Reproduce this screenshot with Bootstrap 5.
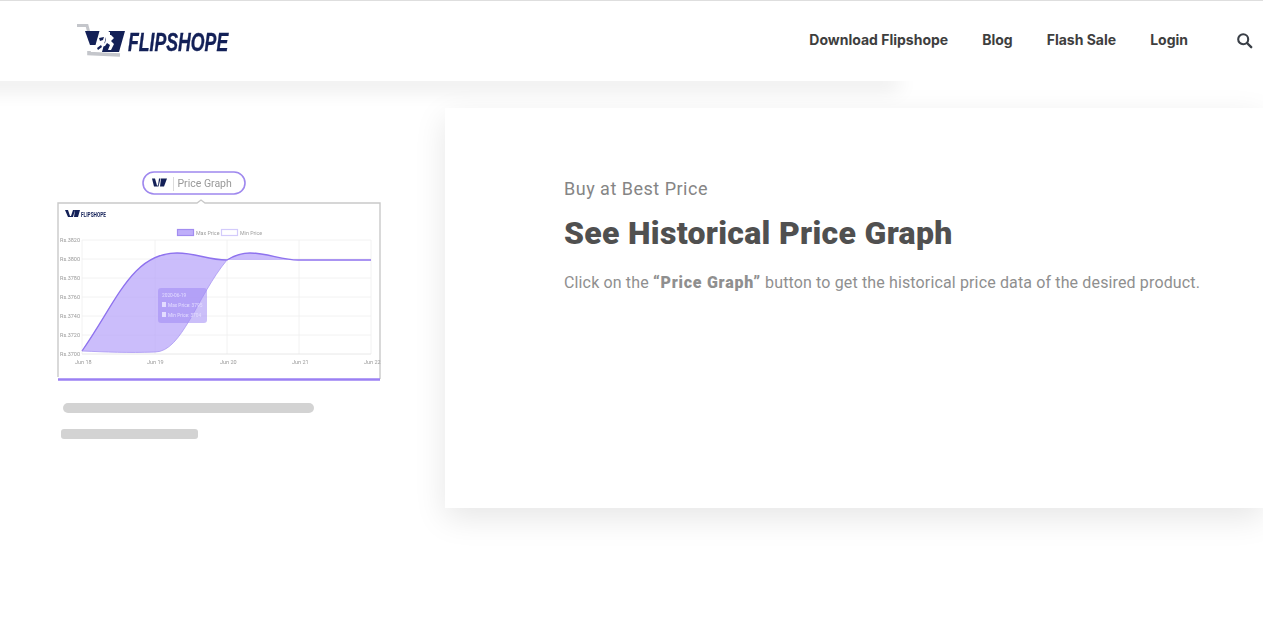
<!DOCTYPE html>
<html lang="en">
<head>
<meta charset="utf-8">
<title>Flipshope</title>
<link rel="stylesheet" href="https://cdn.jsdelivr.net/npm/bootstrap@5.3.0/dist/css/bootstrap.min.css">
<style>
html,body{height:621px;overflow:hidden;background:#fff}
body{font-family:Inter,"Liberation Sans",sans-serif;position:relative}
.fs-header{height:81px;border-top:1px solid #dedede;background:#fff;position:relative;z-index:2;padding:0 10px 0 77px}
.fs-header-shadow{position:absolute;left:-30px;top:76px;width:925px;height:5px;box-shadow:0 4px 20px 4px rgba(0,0,0,.1);z-index:1}
.fs-logo-word{font-family:"Liberation Sans",sans-serif;font-weight:700;font-style:italic;font-size:26px;color:#132057;-webkit-text-stroke:.4px #132057;transform:scaleX(.68);transform-origin:left center;line-height:1;white-space:nowrap;margin:2px -40px 0 1px}
.fs-link{font-size:14px;font-weight:700;color:#3e3e3e;text-decoration:none;line-height:1}
.fs-nav{gap:34px;margin-bottom:2px}
.fs-search{margin-left:14px}
.fs-main{padding-top:27px}
.fs-left{width:445px;flex:none;padding:63px 0 0 57px}
.fs-panel{height:400px;flex:1;background:#fff;box-shadow:0 10px 30px rgba(0,0,0,.1);padding:69px 0 0 119px;position:relative}
.fs-kicker{font-family:Roboto,sans-serif;font-size:18px;letter-spacing:.5px;color:#858585;line-height:24px;margin:0 0 14px}
.fs-title{font-family:Roboto,sans-serif;font-size:32px;font-weight:900;color:#505050;line-height:36px;margin:0 0 20px;letter-spacing:.3px}
.fs-copy{font-family:Roboto,sans-serif;font-size:16px;letter-spacing:.14px;color:#8f8f8f;line-height:24px;margin:0;white-space:nowrap}
.fs-copy b{font-weight:900;letter-spacing:.75px}
.fs-chart{display:block;width:324px;height:212px;filter:blur(.7px)}
.fs-bar{height:10px;background:#d3d3d3;border-radius:5px}
.fs-bar-a{width:251px;margin:20px 0 0 6px}
.fs-bar-b{width:137px;margin:16px 0 0 4px;border-radius:3px}
.fs-chart text{font-family:Roboto,sans-serif}
</style>
</head>
<body>
<div class="fs-header-shadow"></div>
<header class="fs-header d-flex align-items-center justify-content-between">
  <a href="#" class="d-flex align-items-center text-decoration-none">
    <svg width="50" height="36" viewBox="0 0 50 36" aria-hidden="true">
      <path d="M0 2.500H10L13 14" fill="none" stroke="#c4c6cb" stroke-width="3"/>
      <path d="M12 28V30.500L43 32" fill="none" stroke="#c4c6cb" stroke-width="3.600"/>
      <path d="M8 8H22.500L18.500 22H13Z" fill="#132057"/>
      <path d="M32 8H48L42 29H25L29 14Z" fill="#132057"/>
      <path d="M29 12h5l3 3-3 3 3 3-3 6h-3l2-5-3-2-2 3-5 1 2-3 3-1 1-4z" fill="#fff"/>
      <path d="M30 9h3v3h-3z" fill="#fff"/>
      <path d="M22 15l5-1-1 3-3 1zM20 25l4-3 1 2-4 3z" fill="#132057"/>
    </svg>
    <span class="fs-logo-word">FLIPSHOPE</span>
  </a>
  <nav class="d-flex align-items-center fs-nav">
    <a class="fs-link" href="#">Download Flipshope</a>
    <a class="fs-link" href="#">Blog</a>
    <a class="fs-link" href="#">Flash Sale</a>
    <a class="fs-link" href="#">Login</a>
    <a class="fs-link fs-search" href="#" aria-label="Search">
      <svg class="d-block" width="17" height="17" viewBox="0 0 17 17"><circle cx="7.200" cy="7.200" r="5" fill="none" stroke="#3a3f47" stroke-width="2.100"/><path d="M11 11l4.200 4.200" stroke="#3a3f47" stroke-width="2.400" stroke-linecap="round"/></svg>
    </a>
  </nav>
</header>
<main class="d-flex fs-main">
  <div class="fs-left">
    <svg class="fs-chart" viewBox="0 0 324 212" aria-hidden="true">
      <rect x="86" y="1" width="102" height="22" rx="11" fill="#fff" stroke="#9f88ee" stroke-width="1.600"/>
      <path d="M95 7.500h3l2 7h1l1-7h1.500l-2 8h-4.500zM104 7.500h6l-3 8h-4z" fill="#132057"/>
      <path d="M116.500 6v14" stroke="#dcdcdc"/>
      <text x="120.500" y="16" font-size="10.500" fill="#999">Price Graph</text>
      <path d="M1 206V32H140l4-3 4 3H323V208" fill="#fff" stroke="#c9c9c9" stroke-width="1.400"/>
      <path d="M1 208.500H323" stroke="#9b80f3" stroke-width="2.500"/>
      <path d="M8 39h3l2 6h1l2-6h2l-2 7h-5zM18 39h5l-2 7h-4z" fill="#132057"/>
      <text x="24" y="46" font-size="8" font-weight="700" fill="#132057" textLength="25" lengthAdjust="spacingAndGlyphs">FLIPSHOPE</text>
      <rect x="120.500" y="58.500" width="16" height="6" fill="#bfaefa" stroke="#a28df0" stroke-width="1.200"/>
      <text x="139" y="63.500" font-size="5.300" fill="#a0a0a0">Max Price</text>
      <rect x="164.500" y="58.500" width="16" height="6" fill="#fff" stroke="#d3cbfb" stroke-width="1.200"/>
      <text x="183" y="63.500" font-size="5.300" fill="#a0a0a0">Min Price</text>
      <g stroke="#efefef" stroke-width=".8" fill="none">
        <path d="M25 69H314M25 88H314M25 107H314M25 126H314M25 145H314M25 164H314"/>
        <path d="M25 69V183M98 69V183M170 69V183M242 69V183M314 69V183"/>
      </g>
      <path d="M25 183H314" stroke="#e2e2e2" stroke-width=".8"/>
      <g font-size="5.500" fill="#9a9a9a">
        <text x="3" y="71">Rs.3820</text><text x="3" y="90">Rs.3800</text><text x="3" y="109">Rs.3780</text><text x="3" y="128">Rs.3760</text><text x="3" y="147">Rs.3740</text><text x="3" y="166">Rs.3720</text><text x="3" y="185">Rs.3700</text>
        <text x="18" y="193">Jun 18</text><text x="90" y="193">Jun 19</text><text x="163" y="193">Jun 20</text><text x="235" y="193">Jun 21</text><text x="307" y="193">Jun 22</text>
      </g>
      <path d="M25 180C60 130 75 82 120 82C140 82 150 89 170 89C140 125 125 181 98 181C70 182 50 181 25 180Z" fill="#b7a4fa" fill-opacity=".72"/>
      <path d="M170 89C178 84 185 82 193 82C210 82 225 89 241 89Z" fill="#b7a4fa" fill-opacity=".72"/>
      <path d="M25 180C60 130 75 82 120 82C140 82 150 89 170 89C178 84 185 82 193 82C210 82 225 89 241 89H314" fill="none" stroke="#8e72ee" stroke-width="1.300"/>
      <path d="M25 180C50 181 70 182 98 181C125 181 140 125 170 89" fill="none" stroke="#a896f2" stroke-width=".8"/>
      <rect x="101" y="117" width="49" height="35" rx="3" fill="#a08bf4" fill-opacity=".55"/>
      <g fill="#e3dcff" font-size="4.800">
        <text x="105" y="126">2020-06-19</text>
        <rect x="105" y="131" width="4" height="5"/><text x="111" y="136">Max Price: 3795</text>
        <rect x="105" y="141" width="4" height="5"/><text x="111" y="146">Min Price: 3704</text>
      </g>
    </svg>
    <div class="fs-bar fs-bar-a"></div>
    <div class="fs-bar fs-bar-b"></div>
  </div>
  <section class="fs-panel">
    <p class="fs-kicker">Buy at Best Price</p>
    <h1 class="fs-title">See Historical Price Graph</h1>
    <p class="fs-copy">Click on the <b>“Price Graph”</b> button to get the historical price data of the desired product.</p>
  </section>
</main>
<script src="https://cdn.jsdelivr.net/npm/bootstrap@5.3.0/dist/js/bootstrap.bundle.min.js"></script>
</body>
</html>
